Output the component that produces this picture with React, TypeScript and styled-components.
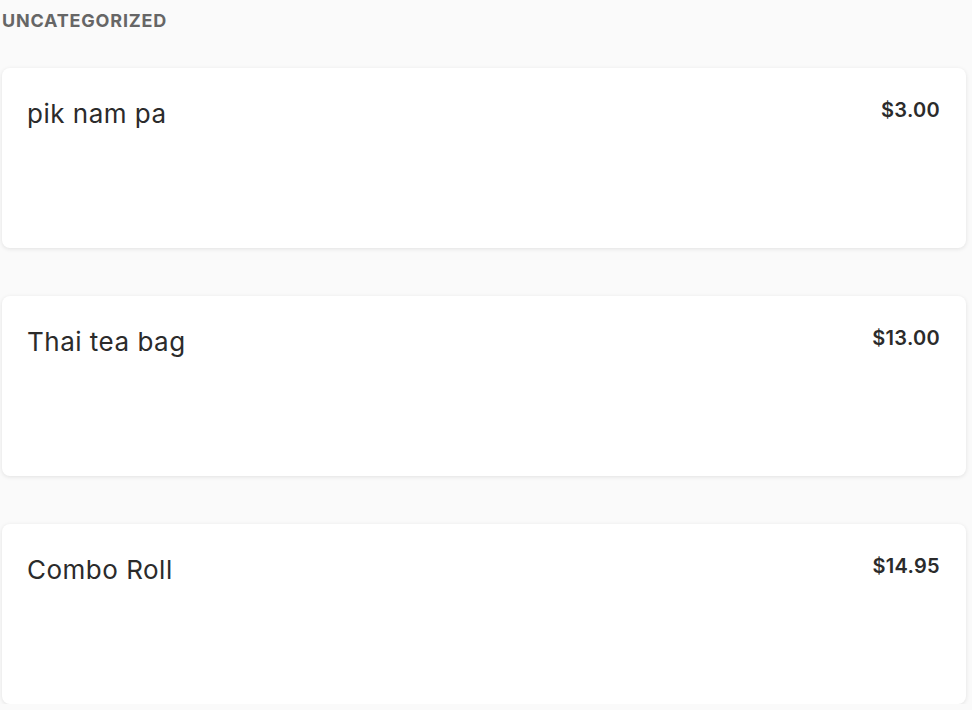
import React from "react";
import styled, { createGlobalStyle } from "styled-components";

const Global = createGlobalStyle`
  html, body { margin: 0; padding: 0; background: #fafafa; }
  body { font-family: Inter, "Noto Sans", sans-serif; }
`;

const Page = styled.div`
  padding: 10px 6px 0 2px;
  display: flex;
  flex-direction: column;
`;

const Heading = styled.h2`
  margin: 0 0 36px 0;
  font-size: 18px;
  font-weight: 700;
  color: #666;
  letter-spacing: 0.8px;
  line-height: 22px;
`;

const List = styled.div`
  display: flex;
  flex-direction: column;
  gap: 48px;
`;

const Card = styled.div`
  height: 180px;
  box-sizing: border-box;
  background: #fff;
  border-radius: 8px;
  box-shadow: 0 1px 4px rgba(0, 0, 0, 0.1);
  padding: 30px 26px 0 25px;
  display: flex;
  justify-content: space-between;
  align-items: flex-start;
`;

const Name = styled.div`
  font-size: 26px;
  font-weight: 400;
  color: #2b2b2b;
  letter-spacing: 0.5px;
  line-height: 32px;
`;

const Price = styled.div`
  font-size: 20px;
  font-weight: 600;
  color: #2b2b2b;
  letter-spacing: 0.3px;
  line-height: 24px;
`;

const items = [
  { name: "pik nam pa", price: "$3.00" },
  { name: "Thai tea bag", price: "$13.00" },
  { name: "Combo Roll", price: "$14.95" },
];

export default function App() {
  return (
    <>
      <Global />
      <Page>
        <Heading>UNCATEGORIZED</Heading>
        <List>
          {items.map((it) => (
            <Card key={it.name}>
              <Name>{it.name}</Name>
              <Price>{it.price}</Price>
            </Card>
          ))}
        </List>
      </Page>
    </>
  );
}
